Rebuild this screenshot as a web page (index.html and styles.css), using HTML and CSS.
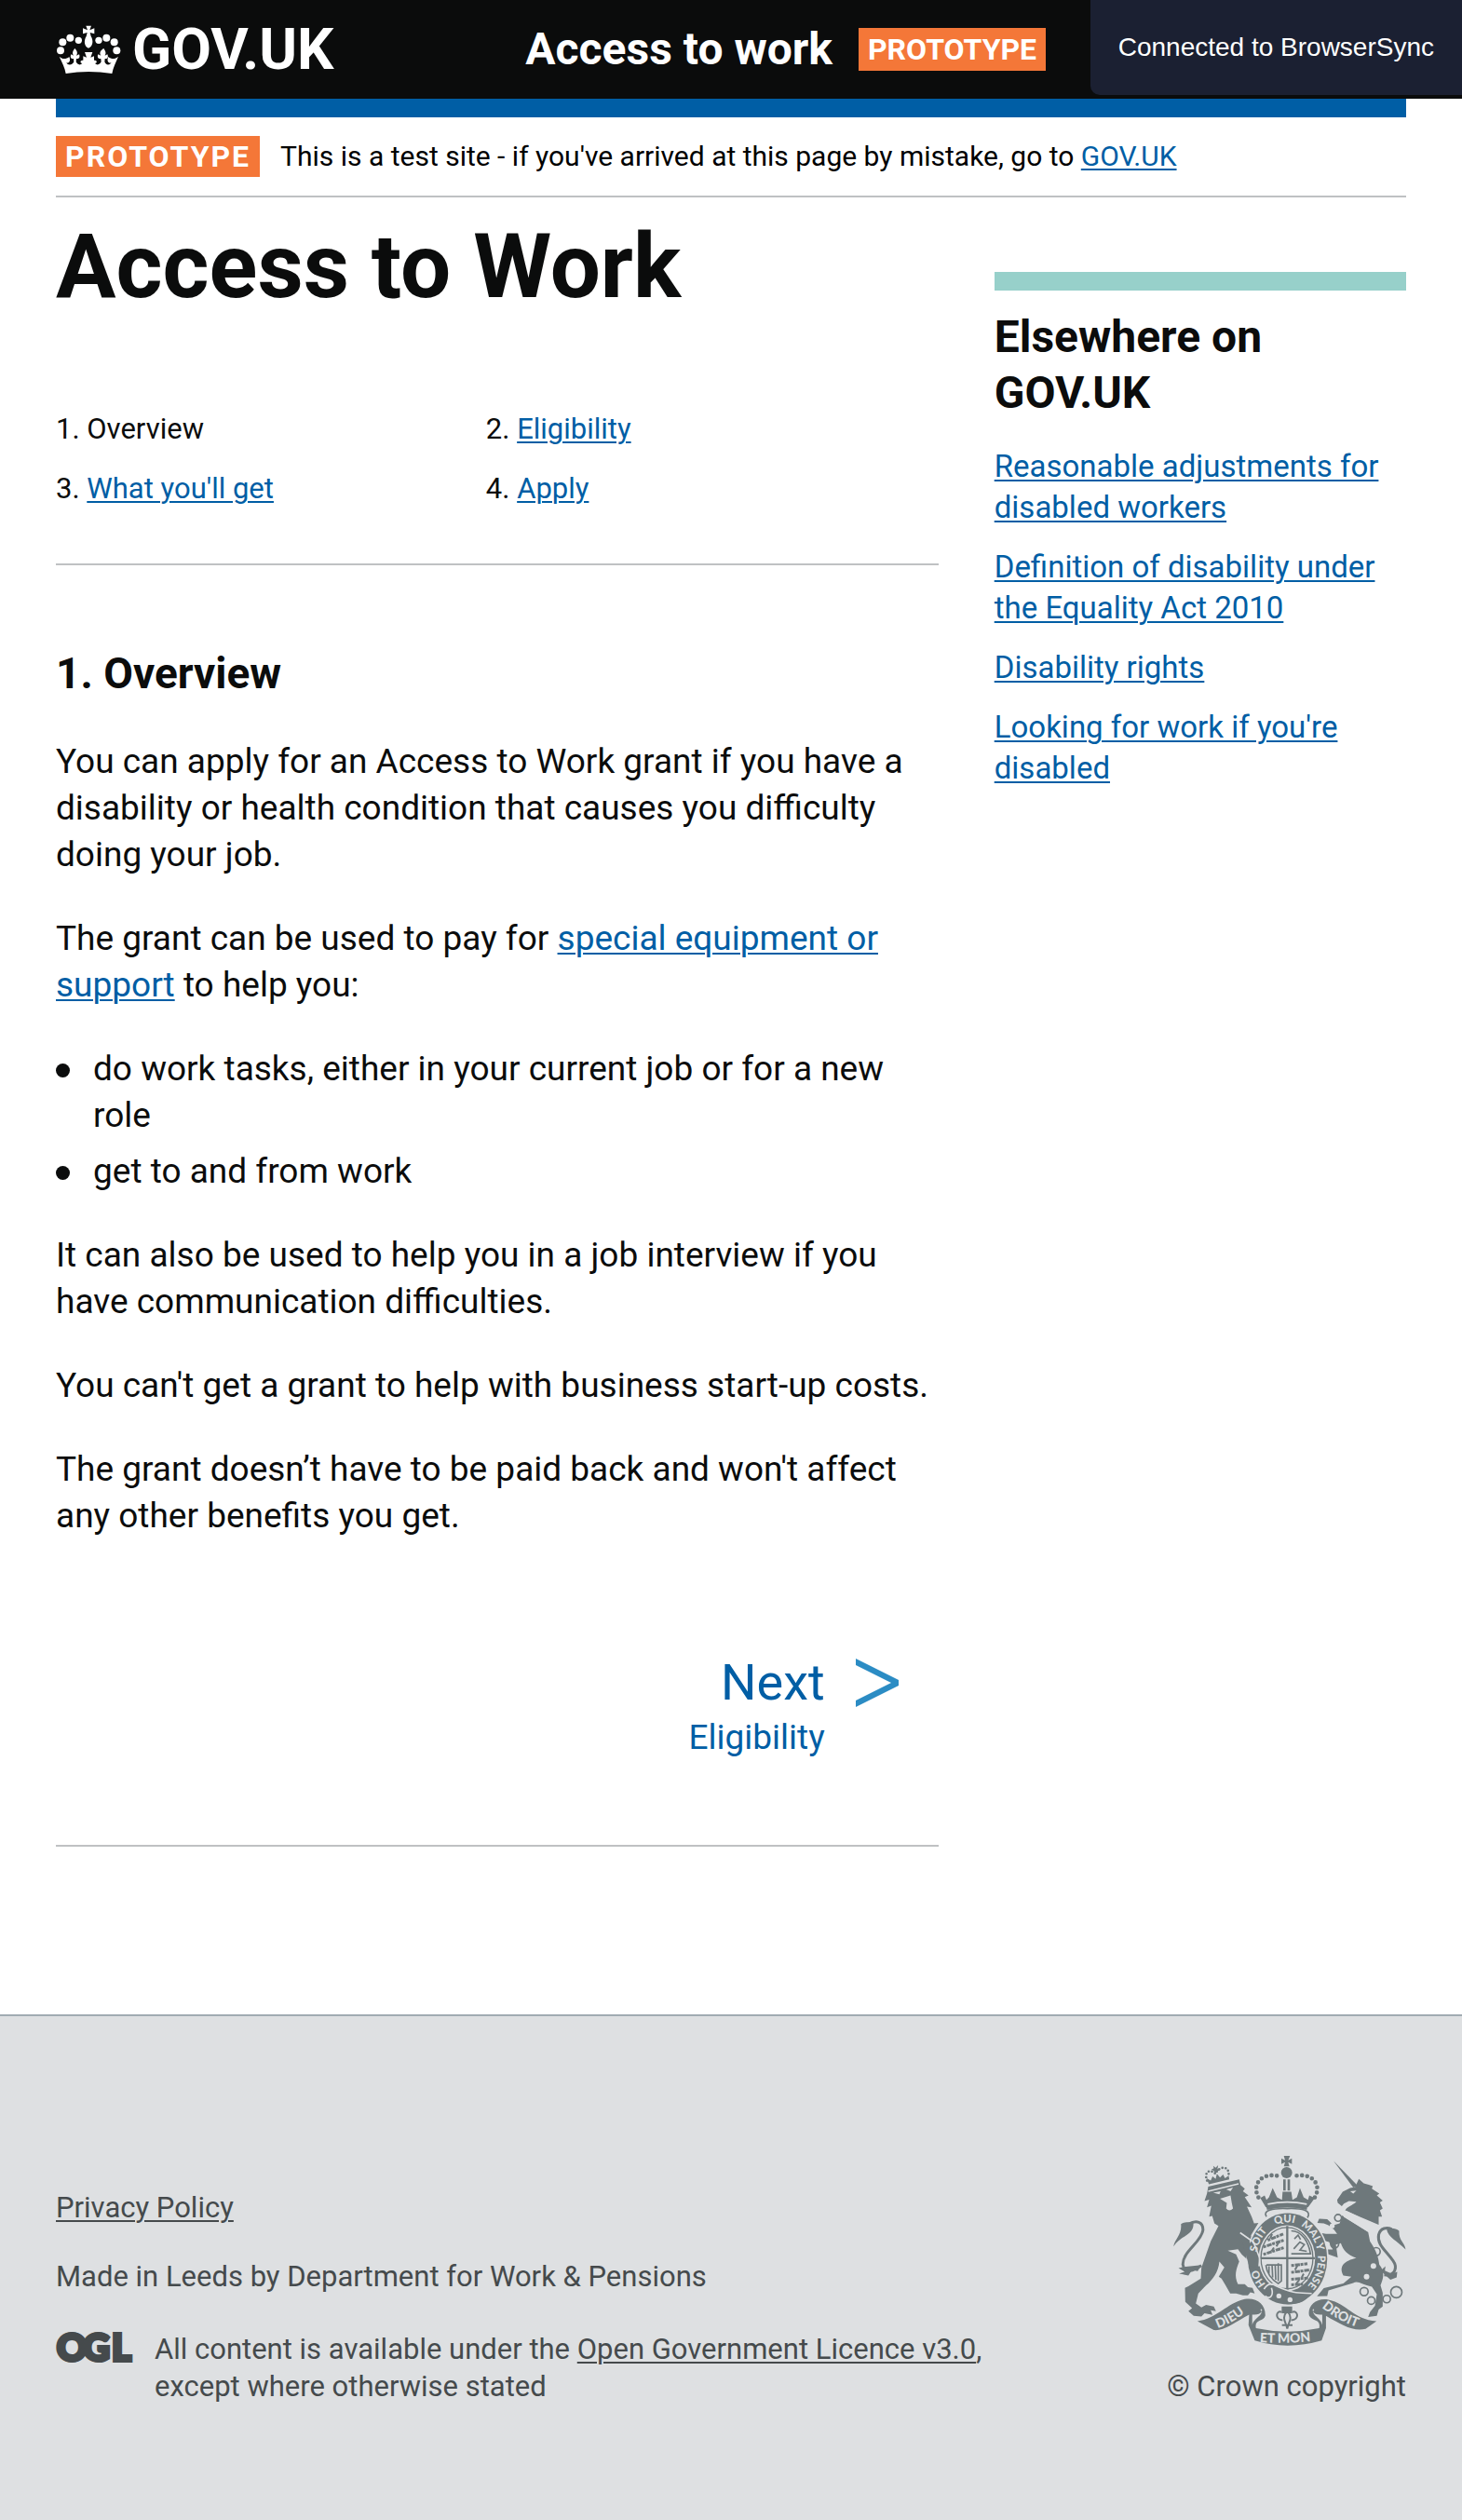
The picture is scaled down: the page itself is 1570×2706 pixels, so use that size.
FILE: index.html
```html
<!DOCTYPE html>
<html lang="en">
<head>
<meta charset="utf-8">
<meta name="viewport" content="width=device-width, initial-scale=1">
<title>Access to Work - Overview</title>
<link rel="stylesheet" href="styles.css">
</head>
<body>
<header class="header">
  <div class="wrap header-inner">
    <a class="logo" href="#">
      <svg class="logo-crown" viewBox="30 30 208 156" aria-hidden="true">
        <g fill="#fff">
          <circle cx="44" cy="112" r="12"/><circle cx="51" cy="85" r="12"/><circle cx="75" cy="71" r="12"/><circle cx="102" cy="79" r="11"/>
          <circle cx="167" cy="79" r="11"/><circle cx="192" cy="71" r="12"/><circle cx="217" cy="85" r="12"/><circle cx="225" cy="112" r="12"/>
          <path d="M126 32H143L138 46L153 40V58L139 54L142 66C150 78 150 98 134 104C119 98 119 78 127 66L130 54L116 58V40L131 46Z"/>
          <path d="M40 131C50 141 62 140 72 132C79 148 68 155 62 150C68 162 84 158 87 148L86 138C78 140 74 133 78 124L86 128C80 118 85 112 90 105C96 112 101 118 95 128L104 124C108 133 103 140 95 138L94 148C98 158 108 160 114 153C106 152 107 142 116 143L128 139L117 146V130L128 134L122 117H147L141 134L152 130V148L141 139L153 143C162 142 163 152 155 153C161 160 171 158 175 148L174 138C166 140 161 133 165 124L174 128C168 118 173 112 183 105C187 112 193 118 187 128L195 124C199 133 195 140 187 138L186 148C189 158 201 162 208 150C201 155 191 148 198 132C208 140 219 141 230 131C222 150 213 168 210 186Q134 174 61 186C58 168 49 150 40 131Z"/>
        </g>
      </svg>
      <span>GOV.UK</span>
    </a>
    <div class="service">
      <span class="service-name">Access to work</span>
      <strong class="tag">PROTOTYPE</strong>
    </div>
  </div>
</header>
<div class="sync-notice" role="status">Connected to BrowserSync</div>

<div class="wrap">
  <div class="phase">
    <strong class="tag phase-tag">PROTOTYPE</strong>
    <span>This is a test site - if you've arrived at this page by mistake, go to <a href="#">GOV.UK</a></span>
  </div>

  <div class="columns">
    <main>
      <h1>Access to Work</h1>
      <nav class="guide" aria-label="Pages in this guide">
        <ol class="parts">
          <li>1. Overview</li>
          <li>2. <a href="#">Eligibility</a></li>
          <li>3. <a href="#">What you'll get</a></li>
          <li>4. <a href="#">Apply</a></li>
        </ol>
      </nav>
      <article class="prose">
        <h2>1. Overview</h2>
        <p>You can apply for an Access to Work grant if you have a disability or health condition that causes you difficulty doing your job.</p>
        <p>The grant can be used to pay for <a href="#">special equipment or support</a> to help you:</p>
        <ul>
          <li>do work tasks, either in your current job or for a new role</li>
          <li>get to and from work</li>
        </ul>
        <p>It can also be used to help you in a job interview if you have communication difficulties.</p>
        <p>You can't get a grant to help with business start-up costs.</p>
        <p>The grant doesn’t have to be paid back and won't affect any other benefits you get.</p>
      </article>
      <nav class="pager" aria-label="Next page">
        <a class="next" href="#">
          <span class="next-label">Next</span>
          <svg class="next-arrow" viewBox="0 0 46 52" aria-hidden="true"><path fill="#2b8cc4" d="M0 0L46 23V29L0 52V45L38 26L0 7Z"/></svg>
          <span class="next-title">Eligibility</span>
        </a>
      </nav>
    </main>

    <aside>
      <h2>Elsewhere on GOV.UK</h2>
      <ul>
        <li><a href="#">Reasonable adjustments for disabled workers</a></li>
        <li><a href="#">Definition of disability under the Equality Act 2010</a></li>
        <li><a href="#">Disability rights</a></li>
        <li><a href="#">Looking for work if you're disabled</a></li>
      </ul>
    </aside>
  </div>
</div>

<footer class="footer">
  <div class="wrap footer-inner">
    <div class="footer-meta">
      <p><a href="#">Privacy Policy</a></p>
      <p>Made in Leeds by Department for Work &amp; Pensions</p>
      <div class="licence">
        <svg class="ogl" viewBox="0 0 82 36" role="img" aria-label="Open Government Licence"><text class="ogl-text" x="1 29 60" y="32">OGL</text></svg>
        <p>All content is available under the <a href="#">Open Government Licence v3.0</a>, except where otherwise stated</p>
      </div>
    </div>
    <a class="copyright" href="#">
      <svg class="crest" viewBox="60 44 750 613" aria-hidden="true">
        <defs>
          <path id="garter" d="M427 492A99 117 0 0 1 427 258A99 117 0 0 1 427 492"/>
          <path id="scroll" d="M338 645Q427 651 516 641"/>
          <path id="scroll-left" d="M203 600Q255 582 304 540"/>
          <path id="scroll-right" d="M538 533Q595 580 660 599"/>
        </defs>
        <g class="ink">
          <!-- lion -->
          <path d="M172 143L272 120L276 138L290 150L284 158L302 172L290 177L312 210L297 208L312 240L320 262L334 260L310 300L313 320L333 370L335 396L320 404L303 396L298 378L280 362L268 345L235 350L262 362L272 385C262 410 255 430 268 458L290 458L300 468L315 470L322 488L308 484L300 494L284 494L262 488L243 488L228 462L215 440L206 434L224 404L208 385C205 420 185 445 165 462L140 488L132 520L150 533L165 525L190 530L197 545L180 542L186 557L160 552L150 562L125 560L108 545L120 535L98 515L97 470L108 465L148 440L150 405L180 320L205 270L192 262L185 238L175 240L182 205L168 210L175 185L160 190L168 166Z"/>
          <path d="M60 336C64 312 88 298 84 264C92 258 108 256 124 260C128 300 84 300 60 336Z"/>
          <path d="M76 406L92 402L150 396L138 416L120 412L108 430L78 424L96 418Z"/>
          <path d="M174 136L167 116L180 124L186 110L196 118L200 102L210 114L220 104L226 116L238 108L240 120Z"/>
          <path d="M188 76L196 82L204 74L202 86L210 90L200 94L194 100L190 92L182 88L190 84Z"/>
          <!-- unicorn -->
          <path d="M576 60L655 141L640 146Z"/>
          <path d="M588 186L606 160L630 148L646 145L658 118L674 133L690 137L703 142L700 150L724 166L716 172L735 188L726 194L735 214L726 220L733 240L722 240L722 266L660 240L614 220C618 208 638 204 650 192L626 190L610 198L603 206L590 196Z"/>
          <path d="M604 236L688 290L694 320C715 350 722 375 724 395C745 420 735 445 728 462L735 486L735 530L722 540L716 560L688 564L694 548L710 528L716 490L700 466C670 460 655 445 640 454L560 478L556 496L523 497L545 471L608 456L634 434L608 430C592 400 612 382 650 374C620 362 608 350 600 326L584 330L590 372L556 360L556 346L574 346L562 322L540 316L530 292L552 296L588 296L578 282L560 268L545 262L524 260L530 247L556 248L576 268L596 262Z"/>
          <path d="M809 346C806 322 786 318 788 286C776 276 758 276 748 282C752 306 784 320 809 346Z"/>
          <path d="M728 414L744 400L742 414L764 424L782 418L780 436L760 444Z"/>
          <!-- royal crown -->
          <path d="M340 180L358 210Q427 184 494 210L516 180L498 172L494 186L480 178L468 148L458 178L444 186L440 160L412 160L410 186L394 178L380 148L368 178L360 186L354 172Z"/>
          <path d="M356 196L362 218Q427 204 490 218L494 196Q427 182 356 196Z"/>
          <path d="M416 44H436L430 58L442 52V70L430 64L434 78H416L420 64L408 70V52L420 58Z"/>
          <circle cx="425" cy="98" r="18"/>
          <path d="M414 120H422V156H414ZM428 120H436V156H428Z"/>
          <!-- scroll -->
          <path d="M137 577C200 570 230 520 290 506C330 500 358 524 356 560C350 580 320 570 326 600Q427 622 530 600C536 570 512 580 498 560C490 530 520 500 560 508C620 520 640 572 715 577L680 602C640 612 600 588 552 560L552 600L538 640Q427 672 322 640L302 590L304 556C260 580 220 610 190 606Z"/>
          <!-- fleur-de-lis -->
          <path d="M409 530H443V552H409Z"/>
        </g>
        <g class="ink-line">
          <path stroke-width="9" d="M150 398C128 412 96 430 90 394C90 352 150 322 155 284C156 256 134 250 108 264"/>
          <path stroke-width="9" d="M740 428C776 432 784 404 768 382C744 348 716 330 722 298C728 276 748 274 764 280"/>
          <path stroke-width="8" stroke-dasharray="0 11" stroke-linecap="round" d="M168 124C158 96 176 84 196 102C204 78 240 72 238 106"/>
          <path stroke-width="14" stroke-linecap="round" stroke-dasharray="0 17" d="M334 178C310 132 350 92 408 112M516 178C542 132 500 92 442 112"/>
          <path stroke-width="5" d="M360 240C346 220 380 212 427 214C474 212 508 220 492 244"/>
          <g stroke-width="5">
            <circle cx="591" cy="244" r="11"/><circle cx="580" cy="328" r="13"/><circle cx="714" cy="353" r="13"/><circle cx="675" cy="482" r="13"/><circle cx="698" cy="511" r="12"/><circle cx="748" cy="506" r="12"/><circle cx="779" cy="484" r="18"/>
          </g>
          <path stroke-width="6" d="M409 548C390 540 386 574 412 574M443 548C462 540 468 574 440 574M427 544C406 570 424 580 427 602C430 580 448 570 427 544M410 590H444"/>
        </g>
        <g class="paper">
          <path d="M188 163L212 158L208 168ZM230 152L252 146L244 158Z"/>
          <path d="M210 182L244 172L248 196L252 214Q240 226 230 214L232 196Z"/>
          <path d="M630 158L650 156L640 166Z"/>
          <circle cx="705" cy="399" r="9"/><circle cx="683" cy="434" r="9"/><circle cx="572" cy="270" r="8"/>
          <path d="M314 556C350 560 350 530 340 540C356 556 320 566 314 590ZM540 556C504 560 506 530 514 540C500 556 536 566 540 590Z"/>
        </g>
        <path class="paper-line" stroke-width="5" d="M172 158L270 134M364 200Q427 186 490 200M618 224L612 240L690 288L704 266Z"/>
        <!-- garter and shield -->
        <ellipse class="paper" cx="428" cy="376" rx="133" ry="150"/>
        <ellipse class="ink" cx="428" cy="376" rx="128" ry="147"/>
        <ellipse class="paper" cx="426" cy="374" rx="91" ry="106"/>
        <ellipse class="ink-line" stroke-width="4" cx="426" cy="374" rx="84" ry="99"/>
        <g class="ink-line">
          <path stroke-width="7" d="M427 270V480M336 374H516"/>
          <path stroke-width="9" stroke-dasharray="9 3 16 2" d="M364 316L414 296M350 338L416 316M350 362L416 340M440 398L492 392M440 420L500 412M440 442L494 438M440 460L478 458"/>
          <path stroke-width="6" d="M372 310L378 296M392 336L400 322M376 352L384 340M452 412L460 398M474 436L480 424M456 456L466 444"/>
          <path stroke-width="5" d="M440 286C474 286 496 322 502 360H440M448 344L468 322L482 330L468 348L490 352M450 312L462 300L470 314"/>
          <path stroke-width="5" d="M360 396H408V448L398 456C376 444 360 420 358 396M368 400V424M378 396L380 436M388 394L390 444M398 390V448"/>
        </g>
        <!-- lion's paw and buckle -->
        <path class="ink" d="M275 296L304 318L328 362L335 398L320 404L303 396L296 372Z"/>
        <path class="paper-line" stroke-width="5" d="M275 292L318 322L338 374L336 400"/>
        <path class="ink" d="M362 462L388 460L440 486L500 492C476 532 420 530 366 502L350 482Z"/>
        <path class="paper-line" stroke-width="5" d="M352 474C366 452 380 456 392 464C446 490 470 486 506 488M356 496C372 510 384 494 376 470"/>
        <circle class="paper" cx="400" cy="496" r="8"/><circle class="paper" cx="436" cy="508" r="8"/>
        <g class="motto">
          <text><textPath href="#garter" startOffset="80">HO</textPath></text>
          <text><textPath href="#garter" startOffset="190">SOIT</textPath></text>
          <text><textPath href="#garter" startOffset="300">QUI</textPath></text>
          <text><textPath href="#garter" startOffset="385">MAL</textPath></text>
          <text><textPath href="#garter" startOffset="462">Y</textPath></text>
          <text><textPath href="#garter" startOffset="500">PENSE</textPath></text>
          <text class="motto-large"><textPath href="#scroll">ET MON</textPath></text>
          <text class="motto-large"><textPath href="#scroll-left">DIEU</textPath></text>
          <text class="motto-large"><textPath href="#scroll-right">DROIT</textPath></text>
        </g>
      </svg>
      <span>© Crown copyright</span>
    </a>
  </div>
</footer>
</body>
</html>
```
FILE: styles.css
```css
* { box-sizing: border-box; }

body {
  margin: 0;
  background: #fff;
  color: #0b0c0c;
  font-family: Roboto, "Liberation Sans", sans-serif;
  font-size: 31px;
  line-height: 40px;
}

h1, h2, p, ul, ol { margin: 0; padding: 0; }
ol, aside ul { list-style: none; }

a {
  color: #005ea5;
  text-decoration-thickness: 2px;
  text-underline-offset: 3px;
}

.wrap { padding: 0 60px; }

/* Header */
.header { background: #0b0c0c; color: #fff; }
.header-inner {
  display: grid;
  grid-template-columns: 8fr 15fr;
  align-items: center;
  min-height: 106px;
}
.logo {
  display: flex;
  align-items: center;
  gap: 12px;
  color: #fff;
  font-size: 62px;
  font-weight: 700;
  line-height: 64px;
  text-decoration: none;
}
.logo-crown { width: 70px; height: 52px; }
.service { display: flex; align-items: center; gap: 28px; }
.service-name { font-size: 48px; font-weight: 700; line-height: 60px; }
.tag {
  padding: 0 10px;
  background: #f47738;
  color: #fff;
  font-size: 32px;
  font-weight: 700;
  line-height: 46px;
}

.sync-notice {
  position: absolute;
  top: 0;
  right: 0;
  padding: 0 30px;
  border-bottom-left-radius: 10px;
  background: #1b2032;
  color: #fff;
  font-family: "Liberation Sans", Arial, sans-serif;
  font-size: 28px;
  line-height: 102px;
}

/* Phase banner */
.phase {
  display: flex;
  align-items: center;
  gap: 22px;
  padding: 20px 0;
  border-top: 20px solid #005ea5;
  border-bottom: 2px solid #bfc1c3;
  color: #000;
  font-size: 30px;
  line-height: 44px;
}
.phase-tag { letter-spacing: 2px; line-height: 44px; }

/* Page columns */
.columns {
  display: grid;
  grid-template-columns: minmax(0, 15fr) minmax(0, 7fr);
  gap: 60px;
  align-items: start;
}
h1 { margin: 24px 0 105px; font-size: 96px; line-height: 100px; }

.guide { border-bottom: 2px solid #bfc1c3; }
.parts {
  display: grid;
  grid-template-columns: 1fr 1fr;
  row-gap: 24px;
  padding: 0 24px 60px 0;
}

.prose {
  max-width: 944px;
  margin-top: 86px;
  font-size: 37px;
  line-height: 50px;
}
.prose h2 { margin-bottom: 40px; font-size: 46px; line-height: 60px; }
.prose p, .prose ul { margin-bottom: 40px; }
.prose ul { padding-left: 40px; list-style: none; }
.prose li { position: relative; }
.prose li + li { margin-top: 10px; }
.prose li::before {
  content: "";
  position: absolute;
  left: -40px;
  top: 19px;
  width: 15px;
  height: 15px;
  border-radius: 50%;
  background: #0b0c0c;
}

.pager {
  display: flex;
  justify-content: flex-end;
  margin-top: 120px;
  padding: 0 43px 90px 0;
  border-bottom: 2px solid #bfc1c3;
}
.next {
  display: grid;
  grid-template-columns: auto auto;
  column-gap: 33px;
  align-items: center;
  text-align: right;
  text-decoration: none;
}
.next-label { font-size: 54px; line-height: 68px; }
.next-title { font-size: 37px; line-height: 50px; }
.next-arrow { width: 46px; height: 52px; }

aside {
  margin-top: 80px;
  padding-top: 20px;
  border-top: 20px solid #97d0ca;
  font-size: 33px;
  line-height: 44px;
}
aside h2 { max-width: 380px; margin-bottom: 27px; font-size: 48px; line-height: 60px; }
aside li + li { margin-top: 20px; }

/* Footer */
.footer {
  margin-top: 180px;
  padding: 150px 0 123px;
  border-top: 2px solid #a1acb2;
  background: #dee0e2;
  color: #454a4c;
}
.footer a { color: #454a4c; }
.footer-inner { display: flex; align-items: flex-end; justify-content: space-between; gap: 60px; }
.footer-meta { display: grid; gap: 34px; }
.licence { display: flex; gap: 24px; margin-top: 4px; }
.licence p { max-width: 920px; }
.ogl { flex: none; width: 82px; height: 36px; overflow: visible; }
.ogl-text {
  fill: #454a4c;
  stroke: #454a4c;
  stroke-width: 4px;
  font-family: Lato, sans-serif;
  font-size: 40px;
  font-weight: 900;
}
.footer .copyright { text-align: right; text-decoration: none; }
.crest { display: block; width: 250px; height: 204px; margin: 0 0 24px auto; }

.ink { fill: #6e787b; }
.ink-line { fill: none; stroke: #6e787b; }
.paper { fill: #dee0e2; }
.paper-line { fill: none; stroke: #dee0e2; }
.motto { fill: #dee0e2; font-family: Lato, sans-serif; font-size: 34px; font-weight: 900; }
.motto-large { font-size: 42px; }
```
